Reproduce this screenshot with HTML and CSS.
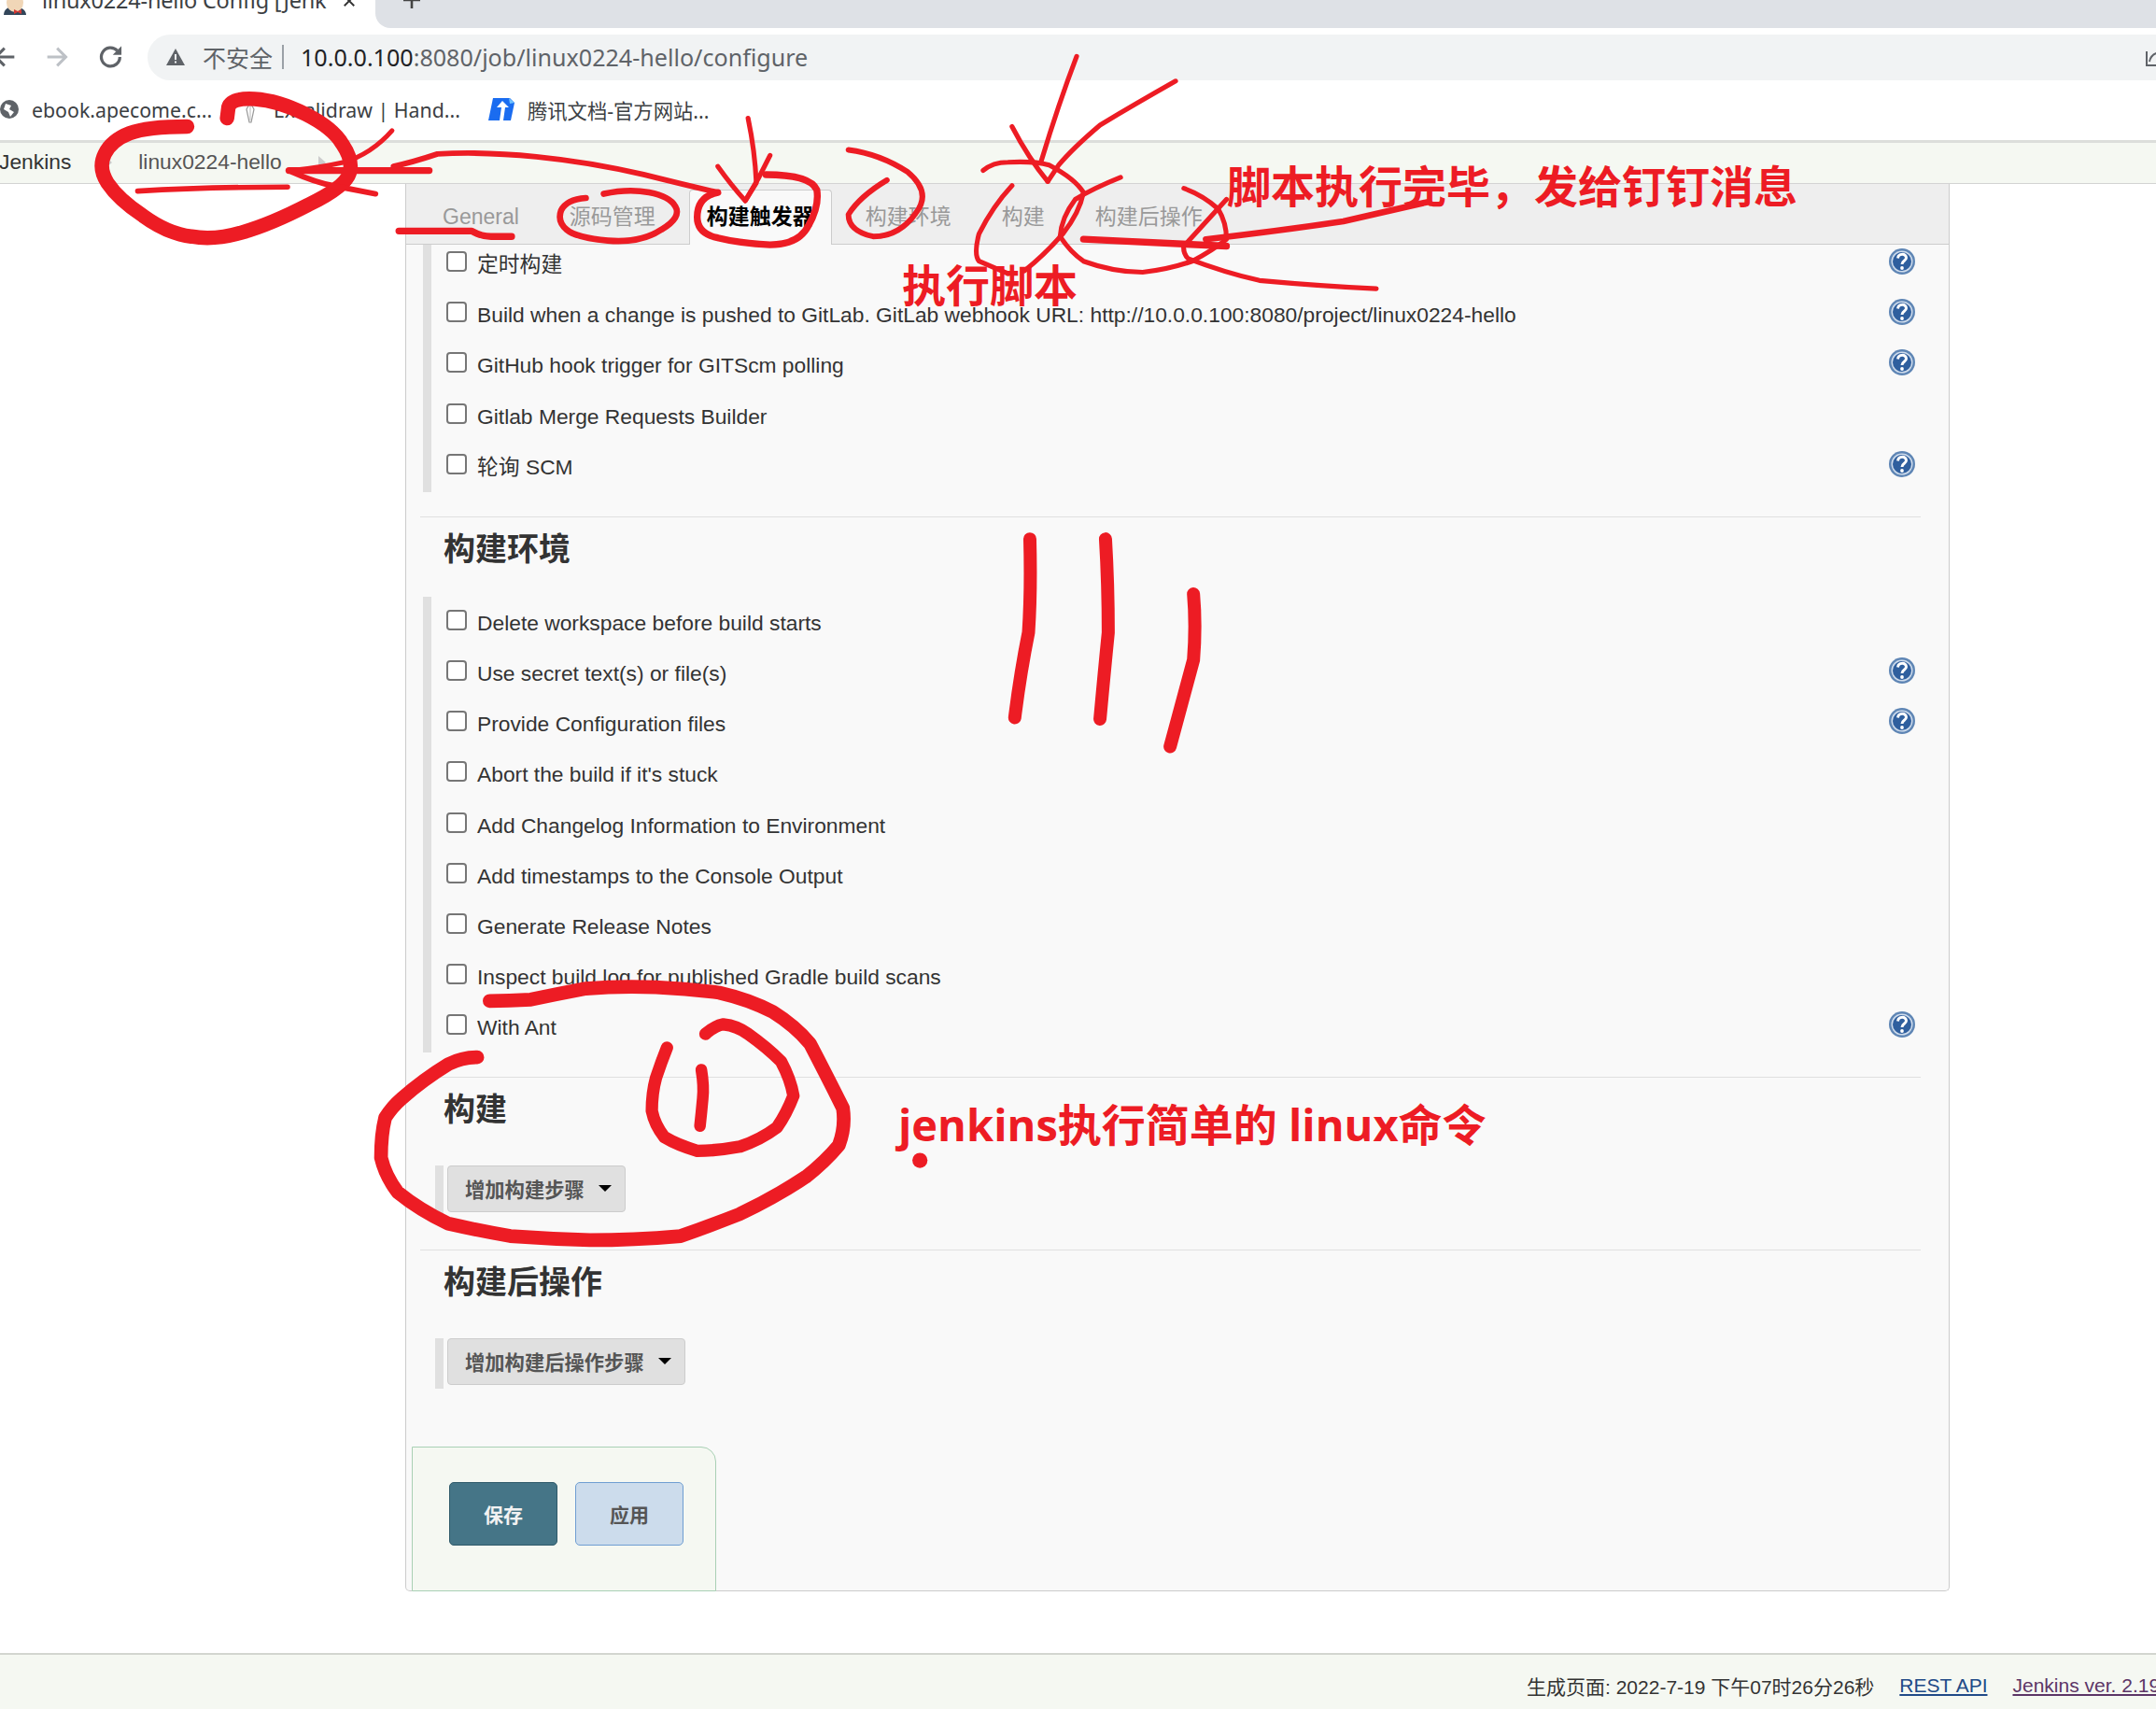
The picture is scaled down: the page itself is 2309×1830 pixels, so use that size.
FILE: index.html
```html
<!DOCTYPE html>
<html lang="zh-CN">
<head>
    <meta charset="UTF-8">
    <title>linux0224-hello Config [Jenkins]</title>
    <link rel="stylesheet" href="styles.css">
</head>
<body>
    <svg class="defs" width="0" height="0">
        <symbol id="help" viewBox="0 0 28 28">
            <circle cx="14" cy="14" r="14" fill="#5f86b5"/>
            <circle cx="14" cy="14" r="11.500" fill="#cfdcec"/>
            <circle cx="14" cy="14" r="10" fill="#2f5f9e"/>
            <path d="M9.500 10.500c.5-5.500 9-5.500 9-.5 0 3.500-4.500 3-4.500 7" fill="none" stroke="#fff" stroke-width="3"/>
            <circle cx="14" cy="21" r="1.900" fill="#fff"/>
        </symbol>
    </svg>

    <div class="tabstrip">
        <div class="tab">
            <svg class="favicon" viewBox="0 0 30 16"><path d="M3 16c0-6 5-9 11-9s13 3 13 9z" fill="#33465a"/><ellipse cx="15" cy="3" rx="9" ry="10" fill="#f0d6b7"/><path d="M14 10l4 2 4-2v5l-4-2-4 2z" fill="#d33833"/></svg>
            <span class="tab-title">linux0224-hello Config [Jenkins]</span>
            <svg class="tab-close" viewBox="0 0 16 16"><path d="M2 2l12 12M14 2L2 14" stroke="#333" stroke-width="2.200"/></svg>
        </div>
        <div class="tab-rest">
            <svg class="tab-plus" viewBox="0 0 20 20"><path d="M10 0v18M1 9h18" stroke="#444" stroke-width="2.600"/></svg>
        </div>
    </div>

    <div class="toolbar">
        <svg class="nav-icon back" viewBox="0 0 24 24"><path d="M20 12H3M11 4l-8 8 8 8" fill="none" stroke="#5f6368" stroke-width="2.600"/></svg>
        <svg class="nav-icon forward" viewBox="0 0 24 24"><path d="M4 12h17M13 4l8 8-8 8" fill="none" stroke="#bdc1c6" stroke-width="2.600"/></svg>
        <svg class="nav-icon reload" viewBox="0 0 24 24"><path d="M20 12a8.500 8.500 0 1 1-2.400-5.900" fill="none" stroke="#5f6368" stroke-width="2.800"/><path d="M21.500 2v8h-8z" fill="#5f6368"/></svg>
        <div class="address">
            <svg class="warn" viewBox="0 0 22 20"><path d="M11 1L21 19H1z" fill="#5f6368"/><path d="M10 7h2v6h-2zM10 14.500h2v2h-2z" fill="#f1f3f4"/></svg>
            <span class="insecure">不安全</span>
            <span class="addr-sep"></span>
            <span class="url"><b>10.0.0.100</b>:8080/job/linux0224-hello/configure</span>
            <svg class="share" viewBox="0 0 20 20"><path d="M2 4v15h18" fill="none" stroke="#5f6368" stroke-width="2"/><path d="M5 15c1-6 5-9 11-10" fill="none" stroke="#5f6368" stroke-width="2"/></svg>
        </div>
    </div>

    <div class="bookmarks">
        <svg class="globe" viewBox="0 0 24 24"><circle cx="10" cy="12" r="10" fill="#5f6368"/><path d="M6 6l6 2-2 4 5 3-4 5-2-5-5-3z" fill="#fff"/></svg>
        <span class="bm bm-ebook">ebook.apecome.c...</span>
        <svg class="clip" viewBox="0 0 12 24"><path d="M6 1L2 8l3 14h2l3-14z" fill="none" stroke="#999" stroke-width="1.200"/><path d="M6 3v17" stroke="#bbb"/></svg>
        <span class="bm bm-excal">Excalidraw | Hand...</span>
        <svg class="txdoc" viewBox="0 0 28 24"><path d="M5 0h18l5 5-4 19H0z" fill="#1a6cf0"/><path d="M22 0l6 5-5 1z" fill="#6fc3ff"/><path d="M15 3l7 7h-4l-2 14h-4l2-14H9z" fill="#fff"/></svg>
        <span class="bm">腾讯文档-官方网站...</span>
    </div>

    <div class="breadcrumbs">
        <span>Jenkins</span>
        <span class="crumb-arrow first"></span>
        <span class="crumb-job">linux0224-hello</span>
        <span class="crumb-arrow"></span>
    </div>

    <div class="panel">
        <div class="tabs">
            <span class="cfg-tab">General</span>
            <span class="cfg-tab">源码管理</span>
            <span class="cfg-tab active">构建触发器</span>
            <span class="cfg-tab">构建环境</span>
            <span class="cfg-tab">构建</span>
            <span class="cfg-tab">构建后操作</span>
        </div>

        <div class="group first-group">
            <div class="row"><input type="checkbox"><label>定时构建</label><svg class="help"><use href="#help"/></svg></div>
            <div class="row"><input type="checkbox"><label>Build when a change is pushed to GitLab. GitLab webhook URL: http://10.0.0.100:8080/project/linux0224-hello</label><svg class="help"><use href="#help"/></svg></div>
            <div class="row"><input type="checkbox"><label>GitHub hook trigger for GITScm polling</label><svg class="help"><use href="#help"/></svg></div>
            <div class="row"><input type="checkbox"><label>Gitlab Merge Requests Builder</label></div>
            <div class="row"><input type="checkbox"><label>轮询 SCM</label><svg class="help"><use href="#help"/></svg></div>
        </div>

        <div class="section">
            <h3>构建环境</h3>
            <div class="group">
                <div class="row"><input type="checkbox"><label>Delete workspace before build starts</label></div>
                <div class="row"><input type="checkbox"><label>Use secret text(s) or file(s)</label><svg class="help"><use href="#help"/></svg></div>
                <div class="row"><input type="checkbox"><label>Provide Configuration files</label><svg class="help"><use href="#help"/></svg></div>
                <div class="row"><input type="checkbox"><label>Abort the build if it's stuck</label></div>
                <div class="row"><input type="checkbox"><label>Add Changelog Information to Environment</label></div>
                <div class="row"><input type="checkbox"><label>Add timestamps to the Console Output</label></div>
                <div class="row"><input type="checkbox"><label>Generate Release Notes</label></div>
                <div class="row"><input type="checkbox"><label>Inspect build log for published Gradle build scans</label></div>
                <div class="row"><input type="checkbox"><label>With Ant</label><svg class="help"><use href="#help"/></svg></div>
            </div>
        </div>

        <div class="section">
            <h3>构建</h3>
            <div class="add-group"><button class="add-btn">增加构建步骤<i class="caret"></i></button></div>
        </div>

        <div class="section">
            <h3>构建后操作</h3>
            <div class="add-group"><button class="add-btn">增加构建后操作步骤<i class="caret"></i></button></div>
        </div>

        <div class="savebar">
            <button class="btn-save">保存</button>
            <button class="btn-apply">应用</button>
        </div>
    </div>

    <div class="footer">
        <span>生成页面: 2022-7-19 下午07时26分26秒</span>
        <a class="rest" href="#">REST API</a>
        <a class="ver" href="#">Jenkins ver. 2.190.1</a>
    </div>

    <!-- 红色批注 -->
    <svg class="ink" viewBox="0 0 1568 1243" fill="none" stroke="#ed1c24" stroke-linecap="round" stroke-linejoin="round">
        <path stroke-width="10.500" d="M136 92Q107 92 94 97Q81 102 76 112Q71 122 78 133Q86 145 104 157Q122 170 139 172Q156 175 176 169Q197 163 224 149Q251 136 254 126Q257 117 249 105Q242 93 222 83Q202 73 185 72Q168 71 166 78L165 86"/>
        <path stroke-width="3.800" d="M100 139Q150 136 209 136"/>
        <path stroke-width="5" d="M210 124L312 124"/>
        <path stroke-width="3.500" d="M285 95Q270 112 250 118Q232 122 212 124"/>
        <path stroke-width="4" d="M212 125Q230 133 242 135L273 141"/>
        <path stroke-width="4" d="M286 121Q300 118 318 112Q350 110 390 114Q430 118 468 127Q500 135 522 140"/>
        <path stroke-width="3.500" d="M544 86Q549 110 550 133L542 146"/>
        <path stroke-width="3.500" d="M522 121Q532 135 542 146Q552 130 560 113"/>
        <path stroke-width="5" d="M522 140Q507 143 507 158Q507 170 522 173Q538 177 560 178Q581 178 588 164Q596 150 594 138Q589 127 557 127"/>
        <path stroke-width="4.500" d="M426 144Q412 145 408 153Q405 161 412 167Q419 173 442 175Q466 177 481 167Q496 158 491 150Q487 143 472 140Q457 137 439 141"/>
        <path stroke-width="5" d="M290 168L343 168Q350 172 357 172L372 172"/>
        <path stroke-width="4" d="M617 109Q640 112 660 125Q678 140 666 155Q654 172 635 172Q617 168 617 156Q625 143 645 131"/>
        <path stroke-width="3.500" d="M783 41Q770 75 757 118"/>
        <path stroke-width="3.500" d="M736 92Q748 115 762 132"/>
        <path stroke-width="3.500" d="M855 59Q825 76 800 91Q780 108 770 120L762 132"/>
        <path stroke-width="3.500" d="M715 124Q722 118 733 118Q752 117 763 120Q782 130 788 140Q785 155 773 170Q760 185 745 197"/>
        <path stroke-width="3.500" d="M736 135Q722 150 712 170Q708 185 712 190L733 199"/>
        <path stroke-width="3.500" d="M815 129Q795 137 782 145Q772 158 771 172Q778 183 788 190Q810 198 831 198Q850 196 867 190Q882 182 892 174Q892 162 886 152Q875 142 861 137"/>
        <path stroke-width="3.500" d="M861 177Q860 184 864 188Q890 198 916 204Q960 208 1001 210"/>
        <path stroke-width="5" d="M788 174L892 179"/>
        <path stroke-width="4.500" d="M877 174Q930 168 977 161L1038 147"/>
        <path stroke-width="3.500" d="M861 179L892 145"/>
        <path stroke-width="9.500" d="M749 392Q750 430 748 460Q742 490 738 522"/>
        <path stroke-width="9.500" d="M804 392Q806 425 806 460Q803 490 800 523"/>
        <path stroke-width="9.500" d="M868 432Q870 455 868 480Q860 510 851 543"/>
        <path stroke-width="10" d="M356 728Q370 728 386 727Q405 723 426 719Q450 717 477 718Q500 719 523 722Q545 727 562 736Q578 746 589 759Q600 780 613 806Q615 820 610 833Q600 845 586 856Q565 870 538 883Q515 892 495 899Q460 902 429 902Q400 901 371 899Q348 895 326 890Q305 880 289 867Q280 855 277 842Q277 825 280 813Q285 805 292 799Q308 785 326 774Q336 769 347 769"/>
        <path stroke-width="9" d="M513 752Q520 746 526 745Q536 746 544 752Q558 762 568 772Q575 785 577 797Q572 810 565 820Q553 829 538 834Q522 837 507 837Q493 833 483 827Q476 818 474 808Q474 795 477 784Q481 772 485 762"/>
        <path stroke-width="8.500" d="M510 778Q512 790 511 799Q510 810 509 819"/>
        <circle cx="669" cy="844" r="5.500" fill="#ed1c24" stroke="none"/>
    </svg>
    <span class="note note-done">脚本执行完毕，发给钉钉消息</span>
    <span class="note note-run">执行脚本</span>
    <span class="note note-cmd">jenkins执行简单的 linux命令</span>
</body>
</html>
```

FILE: styles.css
```css
html, body {
    margin: 0;
    padding: 0;
    height: 1830px;
    overflow: hidden;
}
body {
    position: relative;
    background: #fff;
    color: #333;
    font-family: "Liberation Sans", "Noto Sans CJK SC", sans-serif;
    font-size: 22.800px;
}
.defs {
    position: absolute;
}

/* browser chrome */
.tabstrip {
    display: flex;
    height: 30px;
    overflow: hidden;
}
.tab {
    width: 402px;
    flex: none;
    display: flex;
    align-items: center;
    height: 4px;
    margin-top: -2px;
    font-family: "Noto Sans", "Noto Sans CJK SC", sans-serif;
    font-size: 23.500px;
    letter-spacing: -0.2px;
    color: #3c4043;
    white-space: nowrap;
}
.favicon {
    width: 30px;
    height: 16px;
    margin: 16px 14px 0 1px;
    flex: none;
}
.tab-title {
    width: 305px;
    overflow: hidden;
    flex: none;
    line-height: 34px;
}
.tab-close {
    width: 14px;
    height: 14px;
    margin-left: 17px;
    margin-top: 2px;
    flex: none;
}
.tab-rest {
    flex: 1;
    background: #dee1e6;
    border-bottom-left-radius: 16px;
    padding-left: 29px;
}
.tab-plus {
    display: block;
    width: 20px;
    height: 20px;
    margin-top: -9px;
}
.toolbar {
    display: flex;
    align-items: center;
    height: 56px;
    box-sizing: border-box;
}
.nav-icon {
    width: 28px;
    height: 28px;
    flex: none;
    margin-top: 6px;
}
.back {
    margin-left: -8px;
}
.forward {
    margin-left: 26px;
}
.reload {
    margin-left: 31px;
}
.address {
    flex: 1;
    display: flex;
    align-items: center;
    height: 49px;
    box-sizing: border-box;
    margin: 7px 0 0 25px;
    padding: 0 0 2px 19px;
    background: #f1f3f4;
    border-radius: 25px 0 0 25px;
    font-family: "Noto Sans", "Noto Sans CJK SC", sans-serif;
    font-size: 25.100px;
    color: #5f6368;
    white-space: nowrap;
}
.warn {
    width: 22px;
    height: 20px;
    flex: none;
}
.insecure {
    margin-left: 18px;
    font-size: 25px;
}
.addr-sep {
    width: 2px;
    height: 26px;
    margin: 0 18px 0 10px;
    background: #9aa0a6;
}
.url {
    flex: 1;
}
.url b {
    font-weight: normal;
    color: #202124;
}
.share {
    width: 20px;
    height: 20px;
    margin-right: -8px;
}
.bookmarks {
    display: flex;
    align-items: center;
    height: 64px;
    box-sizing: border-box;
    padding-bottom: 2px;
    font-family: "Noto Sans", "Noto Sans CJK SC", sans-serif;
    font-size: 21.300px;
    color: #3c4043;
    white-space: nowrap;
}
.globe {
    width: 24px;
    height: 24px;
    flex: none;
    margin-right: 10px;
}
.bm-ebook {
    width: 228px;
}
.clip {
    width: 12px;
    height: 24px;
    flex: none;
    margin: 8px 19px 0 0;
}
.bm-excal {
    width: 230px;
}
.txdoc {
    width: 28px;
    height: 24px;
    flex: none;
    margin-right: 14px;
}
.breadcrumbs {
    display: flex;
    align-items: center;
    height: 47px;
    box-sizing: border-box;
    padding-bottom: 2px;
    border-top: 3px solid #dcdedb;
    border-bottom: 1px solid #d3d3d3;
    background: #f5f8f2;
    text-indent: -1px;
}
.crumb-arrow {
    width: 0;
    height: 0;
    margin-left: 39px;
    border-left: 8px solid #ccc;
    border-top: 7px solid transparent;
    border-bottom: 7px solid transparent;
}
.crumb-arrow.first {
    margin-left: 36px;
    margin-right: 29px;
}
.crumb-job {
    color: #555;
}

/* config panel */
.panel {
    width: 1654px;
    height: 1507px;
    box-sizing: border-box;
    margin-left: 434px;
    background: #f9f9f9;
    border: 1px solid #ccc;
    border-top: 0;
    border-radius: 0 0 5px 5px;
}
.tabs {
    display: flex;
    align-items: flex-end;
    height: 65px;
    box-sizing: border-box;
    padding-left: 21px;
    background: #eee;
    border-bottom: 1px solid #ccc;
}
.cfg-tab {
    padding: 0 18px 10px;
    margin-right: 18px;
    line-height: 38px;
    font-size: 23px;
    color: #999;
    white-space: nowrap;
}
.cfg-tab.active {
    margin: 0 18px -1px 0;
    padding-bottom: 11px;
    padding-top: 9px;
    color: #000;
    font-weight: bold;
    background: #f9f9f9;
    border: 1px solid #ccc;
    border-bottom: 0;
    border-radius: 4px 4px 0 0;
}
.group {
    margin: 0 36px 0 18px;
    padding-top: 7px;
    border-left: 9px solid #e0e0e0;
}
.first-group {
    padding-top: 0;
    margin-bottom: 26px;
}
.row {
    display: flex;
    align-items: flex-start;
    height: 54.200px;
    padding-left: 16px;
    box-sizing: border-box;
    padding-top: 7px;
}
.row:last-child {
    height: 48px;
}
.row input {
    appearance: none;
    width: 22px;
    height: 22px;
    margin: 0;
    flex: none;
    box-sizing: border-box;
    background: #fff;
    border: 2px solid #767676;
    border-radius: 4px;
}
.row label {
    margin-left: 11px;
    line-height: 28px;
    white-space: nowrap;
}
.help {
    width: 28px;
    height: 28px;
    flex: none;
    margin: -3px 0 0 auto;
}
.section {
    margin: 0 0 26px 15px;
    width: 1607px;
    border-top: 1px solid #e0e0e0;
}
.section .group {
    margin: 0 0 0 3px;
    width: 1589px;
}
.section h3 {
    height: 69px;
    margin: 0;
    padding: 16px 0 0 25px;
    font-size: 34px;
    line-height: 37px;
    color: #333;
}
.add-group {
    display: flex;
    height: 54px;
    margin: 9px 0 36px 16px;
}
.add-group::before {
    content: "";
    width: 9px;
    margin-right: 4px;
    background: #e0e0e0;
}
.add-btn {
    display: flex;
    align-items: center;
    height: 50px;
    padding: 0 14px 2px 18px;
    box-sizing: border-box;
    background: #e0e0e0;
    border: 1px solid #ccc;
    border-radius: 4px;
    color: #555;
    font: bold 21.300px "Liberation Sans", "Noto Sans CJK SC", sans-serif;
}
.caret {
    width: 0;
    height: 0;
    margin-left: 15px;
    border-top: 7px solid #000;
    border-left: 7px solid transparent;
    border-right: 7px solid transparent;
}
.savebar {
    display: flex;
    gap: 19px;
    width: 326px;
    height: 155px;
    box-sizing: border-box;
    margin: 62px 0 0 6px;
    padding: 37px 0 0 39px;
    background: #f5f8f2;
    border: 1px solid #a9d0b5;
    border-radius: 0 16px 0 0;
}
.savebar button {
    width: 116px;
    height: 68px;
    box-sizing: border-box;
    border-radius: 5px;
    font: bold 21px "Liberation Sans", "Noto Sans CJK SC", sans-serif;
}
.btn-save {
    background: #457587;
    border: 1px solid #2f5a6a;
    color: #f2f2f2;
}
.btn-apply {
    background: #ccdcec;
    border: 1px solid #6f9ed2;
    color: #555;
}

/* footer */
.footer {
    display: flex;
    align-items: center;
    height: 60px;
    margin-top: 66px;
    padding: 8px 0 0 1635px;
    box-sizing: border-box;
    border-top: 2px solid #d3d6d0;
    background: #f5f8f2;
    font-size: 21px;
    white-space: nowrap;
}
.footer a {
    margin-left: 27px;
    flex: none;
}
.rest {
    color: #204a87;
}
.ver {
    color: #5c3566;
}

/* annotations drawn over the page */
.ink {
    position: absolute;
    top: 0;
    left: 0;
    width: 2309px;
    height: 1830px;
    pointer-events: none;
}
.note {
    position: absolute;
    color: #ed1c24;
    font-family: "Noto Sans CJK SC", sans-serif;
    font-weight: bold;
    font-size: 47px;
    line-height: 60px;
    white-space: nowrap;
}
.note-done {
    top: 167px;
    left: 1314px;
}
.note-run {
    top: 273px;
    left: 966px;
}
.note-cmd {
    top: 1174px;
    left: 962px;
    font-family: "Open Sans", "Noto Sans CJK SC", sans-serif;
    font-size: 47px;
}
```
